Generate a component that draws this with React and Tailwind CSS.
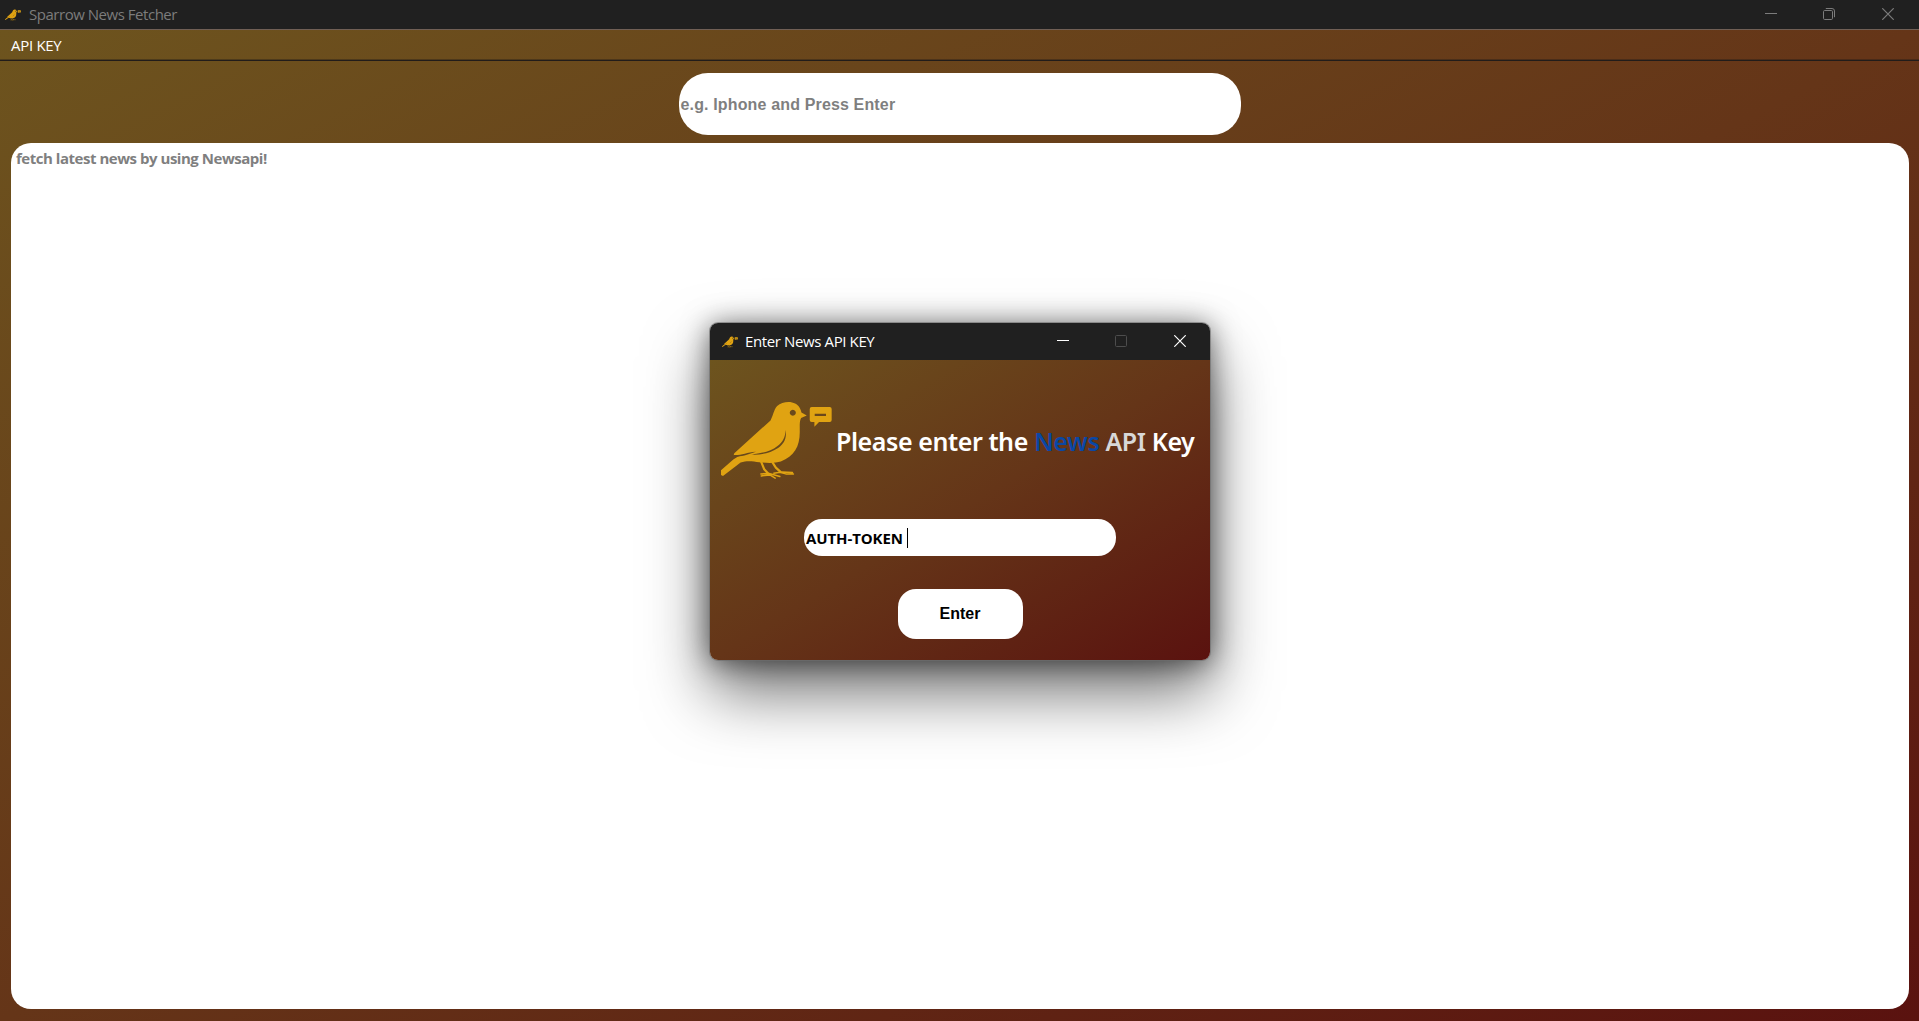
function Bird({ className }) {
  return (
    <svg viewBox="60 270 340 240" className={className} fill="#e0a312">
      <path
        fillRule="evenodd"
        d="M63 481 L100 449 Q112 440 124 437 L101 436 L103 430 L212 331 C220 318 221 300 232 288 C246 274 272 272 286 280 C298 286 303 297 305 307 L321 316 L304 324 C299 334 300 346 300 361 C301 410 284 437 243 455 C226 460 205 460 178 457 C160 455 143 451 122 458 L69 498 L63 495 Z M279 299 A9 9 0 1 0 279.1 299 Z"
      />
      <g fill="none" stroke="#e0a312" strokeLinecap="round" strokeLinejoin="round">
        <path d="M184 456 L193 478 L205 491" strokeWidth="6.5" />
        <path d="M217 456 L228 473 L242 486" strokeWidth="6.5" />
        <path d="M183 492 L208 491 L240 500 M184 498 L210 495 L226 505" strokeWidth="4.5" />
        <path d="M222 490 L246 486 L278 488 M240 487 L258 492 L281 492" strokeWidth="4.5" />
      </g>
      <path d="M257 360 C262 384 252 402 236 413 C210 430 180 436 154 434 C186 430 214 424 232 409 C249 396 257 382 257 360 Z" fill="#68491c" />
      <path d="M102 435 C125 436 140 427 168 425 C148 432 128 441 101 438.5 Z" fill="#68491c" />
      <path fillRule="evenodd" d="M336 291 h54 q6 0 6 6 v33 q0 6 -6 6 h-32 l-14 14 v-14 h-8 q-6 0 -6 -6 v-33 q0 -6 6 -6 Z M345 311 v7 h34 v-7 Z" />
    </svg>
  );
}

function MinimizeIcon() {
  return (
    <svg width="12" height="12" viewBox="0 0 12 12">
      <path d="M0 5.5 H12" stroke="currentColor" />
    </svg>
  );
}

function RestoreIcon() {
  return (
    <svg width="12" height="12" viewBox="0 0 12 12" fill="none" stroke="currentColor">
      <rect x="0.5" y="2.5" width="9" height="9" rx="1.2" />
      <path d="M2.8 0.5 H9 Q11.5 0.5 11.5 3 V9.2" />
    </svg>
  );
}

function MaximizeIcon() {
  return (
    <svg width="12" height="12" viewBox="0 0 12 12" fill="none" stroke="currentColor">
      <rect x="0.5" y="0.5" width="11" height="11" rx="1" />
    </svg>
  );
}

function CloseIcon() {
  return (
    <svg width="12" height="12" viewBox="0 0 12 12" stroke="currentColor" strokeWidth="1.2">
      <path d="M0.3 0.3 L11.7 11.7 M11.7 0.3 L0.3 11.7" />
    </svg>
  );
}

function Dialog() {
  return (
    <div className="absolute left-[710px] top-[323px] flex h-[337px] w-[500px] flex-col overflow-hidden rounded-lg shadow-[0_0_0_1px_rgba(110,110,110,0.6),0_32px_64px_rgba(0,0,0,0.56),0_2px_28px_rgba(0,0,0,0.55)]">
      <div className="flex h-[37px] shrink-0 items-center bg-[#202020] text-white">
        <Bird className="ml-3 h-[12px] w-[16px]" />
        <span className="ml-[7px] grow text-[15px] tracking-[-0.38px]">Enter News API KEY</span>
        <div className="mr-6 flex pb-px">
          <MinimizeIcon />
          <span className="ml-[46px] mr-[47px] text-[#4d4d4d]"><MaximizeIcon /></span>
          <CloseIcon />
        </div>
      </div>
      <div className="flex grow flex-col items-center bg-linear-to-br/srgb from-[#6d541e] via-[#653518] to-[#5a120f]">
        <div className="flex h-[159px] w-full items-start">
          <Bird className="ml-[10px] mt-[40px] h-[80px] w-[113px]" />
          <h1 className="ml-[3px] mt-[64px] whitespace-nowrap font-['Noto_Sans'] text-[25px] font-semibold leading-[34px] tracking-[-0.42px] text-white">
            Please enter the <span className="text-[#0a47a5]">News</span> <span className="text-[#d8d8d8]">API</span> Key
          </h1>
        </div>
        <div className="flex h-[37px] w-[312px] items-center rounded-[18px] bg-white pl-[2px]">
          <span className="pt-px text-[15px] font-bold tracking-[-0.1px] text-black">AUTH-TOKEN</span>
          <span className="ml-1 h-5 w-px bg-black" />
        </div>
        <button className="mt-[33px] h-[50px] w-[125px] rounded-[18px] bg-white font-['Liberation_Sans'] text-base font-bold text-black">
          Enter
        </button>
      </div>
    </div>
  );
}

export default function App() {
  return (
    <div className="relative flex h-[1021px] w-[1919px] flex-col overflow-hidden font-['Open_Sans','Noto_Sans',sans-serif]">
      <header className="flex h-[29px] shrink-0 items-center bg-[#202020] text-[#7c7c7c]">
        <Bird className="ml-[5px] h-[12px] w-[16px]" />
        <span className="ml-2 grow text-[15px] tracking-[-0.47px]">Sparrow News Fetcher</span>
        <div className="mr-[25px] flex pb-px">
          <MinimizeIcon />
          <span className="ml-[46px] mr-[47px]"><RestoreIcon /></span>
          <CloseIcon />
        </div>
      </header>
      <div className="flex grow flex-col bg-linear-to-br/srgb from-[#6d541e] via-[#653518] to-[#5a120f]">
        <nav className="flex h-[32px] shrink-0 items-center border-b border-t border-b-[#211c1a] border-t-[#705f55] pl-[11px] text-[15px] tracking-[-0.3px] text-white shadow-[inset_0_-1px_0_rgba(32,28,26,0.4)]">
          API KEY
        </nav>
        <div className="mt-3 flex h-[62px] w-[562px] shrink-0 items-center self-center rounded-[29px] bg-white pl-[2px] pt-[2px] font-['Liberation_Sans'] text-base font-bold tracking-[0.15px] text-[#7f7f7f]">
          e.g. Iphone and Press Enter
        </div>
        <main className="mb-3 ml-[11px] mr-[10px] mt-2 grow rounded-[20px] bg-white pl-[5px] pt-1 text-[15px] font-bold tracking-[-0.47px] text-[#7f7f7f]">
          fetch latest news by using Newsapi!
        </main>
      </div>
      <Dialog />
    </div>
  );
}
